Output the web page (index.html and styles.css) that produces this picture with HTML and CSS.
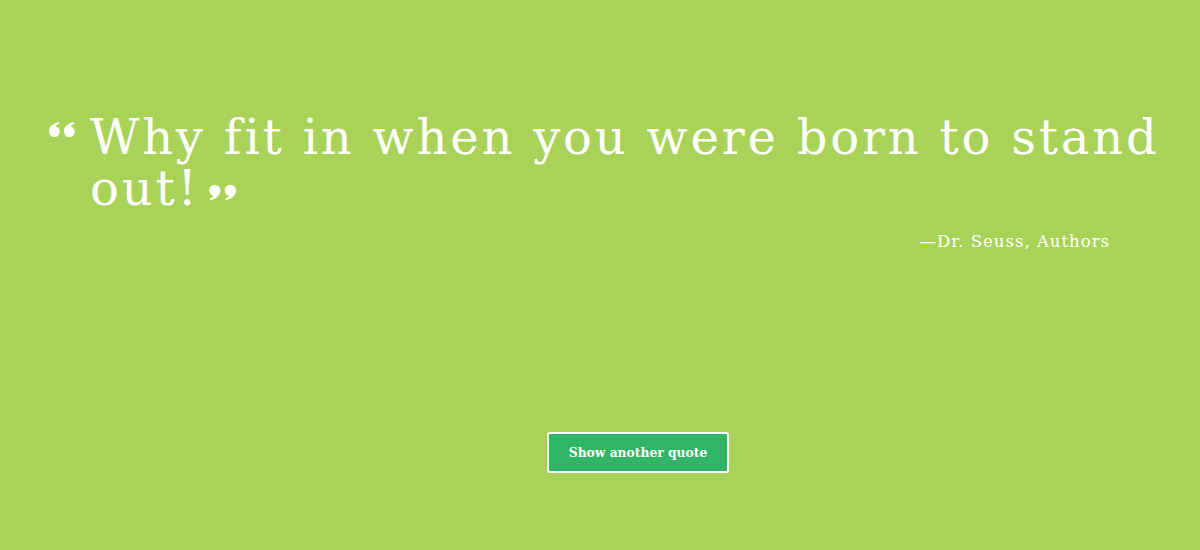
FILE: index.html
```html
<!DOCTYPE html>
<html>
<head>
<meta charset="utf-8">
<link rel="stylesheet" href="styles.css">
</head>
<body>
<main class="page">
  <section class="quote-box">
    <blockquote class="quote">
      <svg class="mark mark-open" viewBox="0 0 28 15" width="28" height="15" aria-hidden="true">
        <g fill="#fff">
          <circle cx="6.4" cy="9.6" r="5.4"/>
          <path d="M1 9.8 C1 4.8 4.5 1.4 10.8 0 L11.4 1.4 C7.8 3 6.6 5 6.6 7.5 Z"/>
          <circle cx="21.4" cy="9.6" r="5.4"/>
          <path d="M16 9.8 C16 4.8 19.5 1.4 25.8 0 L26.4 1.4 C22.8 3 21.6 5 21.6 7.5 Z"/>
        </g>
      </svg>
      <p class="quote-text">Why fit in when you were born to stand out!<svg class="mark mark-close" viewBox="0 0 28 15" width="29" height="17" aria-hidden="true">
        <g fill="#fff" transform="rotate(180 14 7.5)">
          <circle cx="6.4" cy="9.6" r="5.4"/>
          <path d="M1 9.8 C1 4.8 4.5 1.4 10.8 0 L11.4 1.4 C7.8 3 6.6 5 6.6 7.5 Z"/>
          <circle cx="21.4" cy="9.6" r="5.4"/>
          <path d="M16 9.8 C16 4.8 19.5 1.4 25.8 0 L26.4 1.4 C22.8 3 21.6 5 21.6 7.5 Z"/>
        </g>
      </svg></p>
    </blockquote>
    <p class="author">&mdash;Dr. Seuss, Authors</p>
  </section>
  <div class="actions">
    <button class="btn">Show another quote</button>
  </div>
</main>
</body>
</html>
```
FILE: styles.css
```css
html, body {
  margin: 0;
  padding: 0;
  height: 100%;
}
body {
  background: #a8d358;
  color: #fff;
  font-family: "DejaVu Serif", Georgia, serif;
}
.page {
  height: 550px;
  display: flex;
  flex-direction: column;
}
.quote-box {
  padding: 112px 30px 0 48px;
}
.quote {
  margin: 0;
  display: flex;
  align-items: flex-start;
}
.mark-open {
  flex: none;
  margin: 10px 14px 0 0;
}
.mark-close {
  margin-left: 8px;
  vertical-align: 4px;
}
.quote-text {
  margin: 0;
  font-size: 48px;
  line-height: 51px;
  letter-spacing: 2.8px;
}
.author {
  margin: 18px 60px 0 0;
  text-align: right;
  font-size: 16.5px;
  letter-spacing: 1px;
}
.actions {
  margin-top: auto;
  padding: 0 0 77px 76px;
  display: flex;
  justify-content: center;
}
.btn {
  width: 182px;
  height: 41px;
  background: #2fb565;
  color: #fff;
  border: 2px solid #fff;
  border-radius: 3px;
  font-family: "DejaVu Serif", Georgia, serif;
  font-weight: bold;
  font-size: 12.3px;
}
```
